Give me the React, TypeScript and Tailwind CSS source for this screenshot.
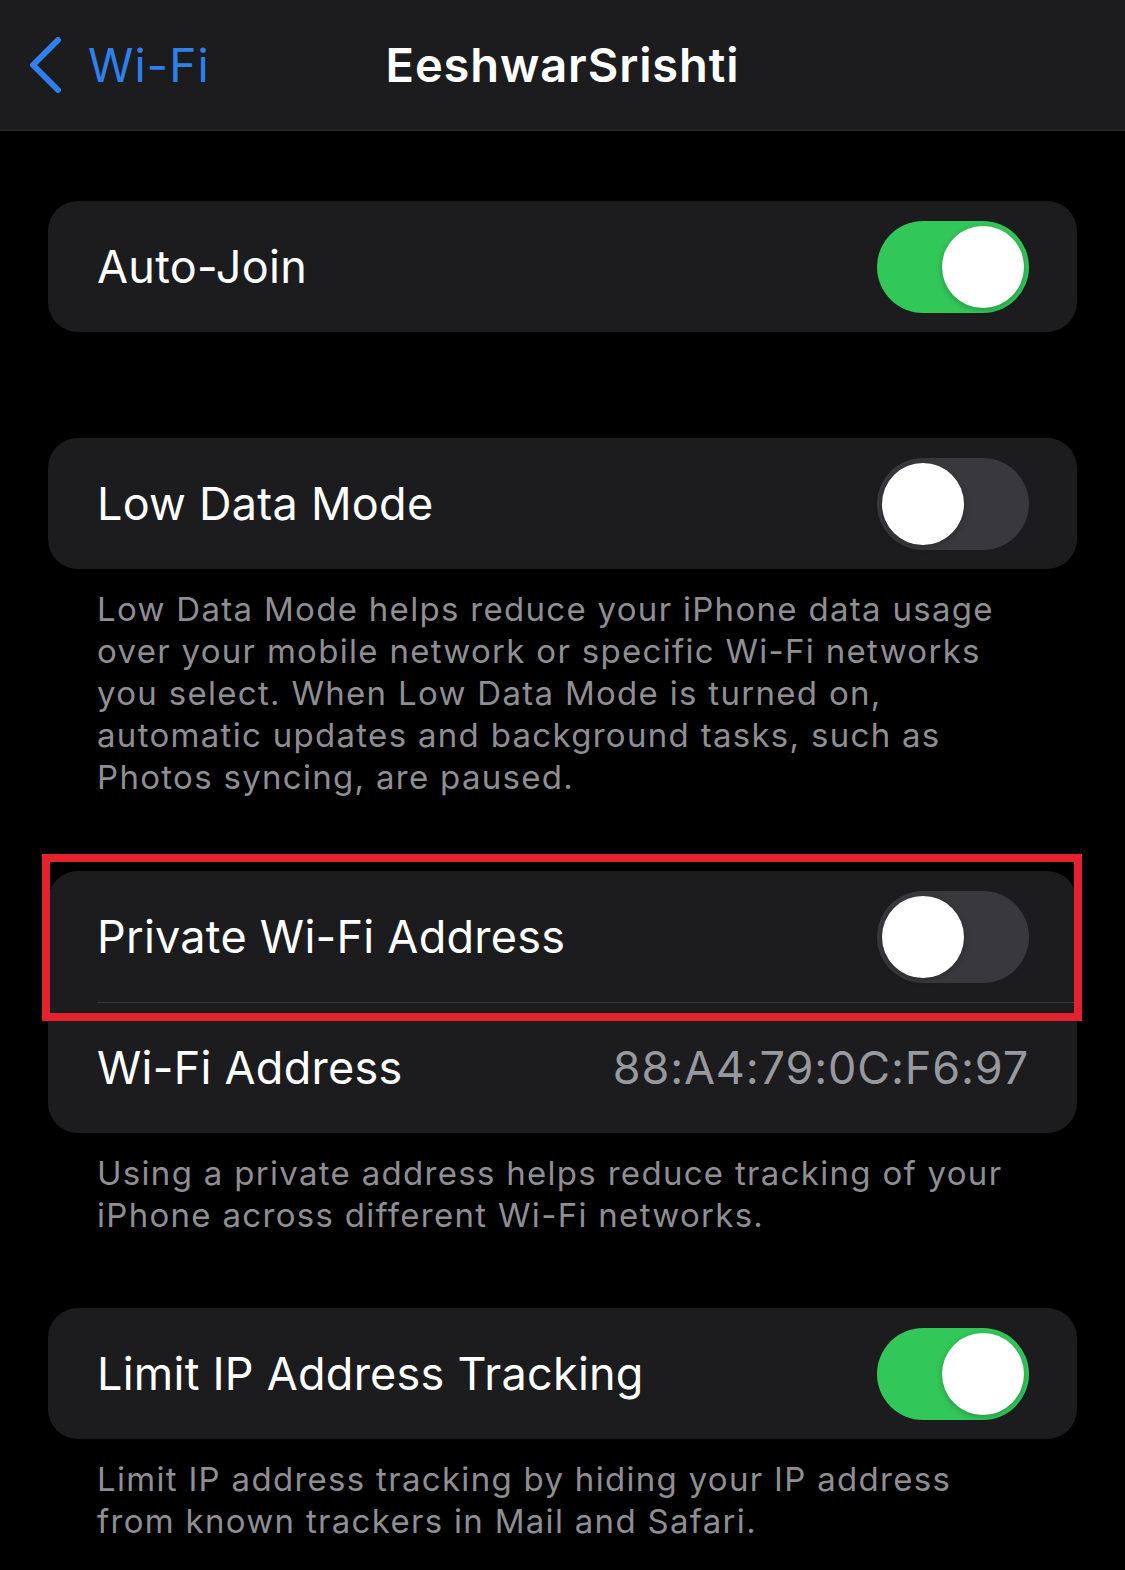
import React from "react";

function Toggle({ on }: { on: boolean }) {
  return (
    <div
      className={
        on
          ? "w-[152px] h-[92px] rounded-full p-[5px] flex justify-end bg-[#32c759]"
          : "w-[152px] h-[92px] rounded-full p-[5px] flex justify-start bg-[#39393d]"
      }
    >
      <div className="w-[82px] h-[82px] rounded-full bg-white shadow-[0_2px_6px_rgba(0,0,0,0.25)]" />
    </div>
  );
}

function Footnote({ lines }: { lines: string[] }) {
  return (
    <div className="pt-[19px] pl-[49px] text-[33px] leading-[42px] text-[#8e8e93] tracking-[1.3px]">
      {lines.map((l) => (
        <div key={l}>{l}</div>
      ))}
    </div>
  );
}

function ToggleRow({ label, on }: { label: string; on: boolean }) {
  return (
    <div className="h-[131px] flex items-center justify-between pl-[49px] pr-[48px]">
      <span className="text-[45px] text-white tracking-[0.25px]">{label}</span>
      <Toggle on={on} />
    </div>
  );
}

export default function App() {
  return (
    <div
      className="w-[1125px] h-[1570px] bg-black overflow-hidden"
      style={{ fontFamily: "Inter, 'Noto Sans', sans-serif" }}
    >
      <header className="h-[131px] bg-[#1c1c1e] border-b border-[#2c2c2e] grid grid-cols-[1fr_auto_1fr] items-center">
        <div className="flex items-center pl-[28px] gap-[26px] text-[#2f80ed]">
          <svg width="34" height="56" viewBox="0 0 34 56" fill="none">
            <path
              d="M30 3 L5 28 L30 53"
              stroke="currentColor"
              strokeWidth="6"
              strokeLinecap="round"
              strokeLinejoin="round"
            />
          </svg>
          <span className="text-[46px] tracking-[1.2px]">Wi-Fi</span>
        </div>
        <h1 className="text-[47px] font-semibold text-white tracking-[0.9px]">
          EeshwarSrishti
        </h1>
        <div />
      </header>

      <main className="px-[48px] pt-[70px]">
        <section className="rounded-[30px] bg-[#1c1c1e]">
          <ToggleRow label="Auto-Join" on />
        </section>

        <section className="mt-[106px] rounded-[30px] bg-[#1c1c1e]">
          <ToggleRow label="Low Data Mode" on={false} />
        </section>
        <Footnote
          lines={[
            "Low Data Mode helps reduce your iPhone data usage",
            "over your mobile network or specific Wi-Fi networks",
            "you select. When Low Data Mode is turned on,",
            "automatic updates and background tasks, such as",
            "Photos syncing, are paused.",
          ]}
        />

        <section className="relative mt-[73px] rounded-[30px] bg-[#1c1c1e]">
          <ToggleRow label="Private Wi-Fi Address" on={false} />
          <div className="ml-[49px] h-px bg-[#3a3a3c]" />
          <div className="h-[130px] flex items-center justify-between pl-[49px] pr-[48px]">
            <span className="text-[45px] text-white tracking-[0.25px]">Wi-Fi Address</span>
            <span className="text-[45px] text-[#98989f] tracking-[0.85px]">88:A4:79:0C:F6:97</span>
          </div>
          <div className="absolute left-[-6px] top-[-17px] w-[1040px] h-[167px] border-[8px] border-[#e3222b]" />
        </section>
        <Footnote
          lines={[
            "Using a private address helps reduce tracking of your",
            "iPhone across different Wi-Fi networks.",
          ]}
        />

        <section className="mt-[72px] rounded-[30px] bg-[#1c1c1e]">
          <ToggleRow label="Limit IP Address Tracking" on />
        </section>
        <Footnote
          lines={[
            "Limit IP address tracking by hiding your IP address",
            "from known trackers in Mail and Safari.",
          ]}
        />
      </main>
    </div>
  );
}
